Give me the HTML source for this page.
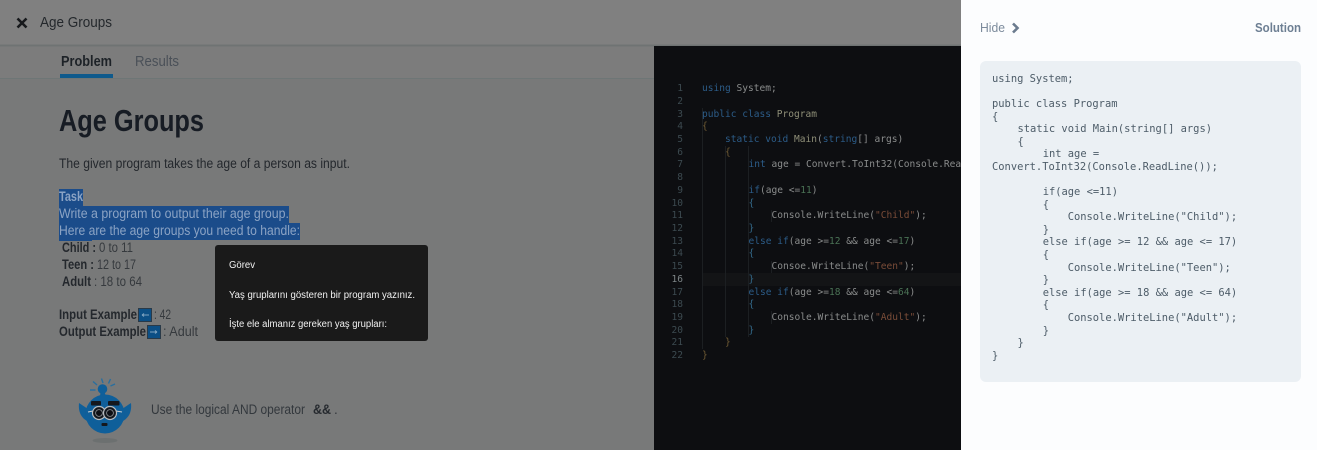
<!DOCTYPE html>
<html><head><meta charset="utf-8"><title>Age Groups</title>
<style>
html,body{margin:0;padding:0;width:1317px;height:450px;overflow:hidden;background:#787878}
svg{display:block}
text{font-family:"Liberation Sans",sans-serif;white-space:pre}
.m text,text.m{font-family:"DejaVu Sans Mono",monospace}
.e text{font-size:9.55px;fill:#8a8c8c}
.n text{font-size:9.55px;fill:#3c4a50;text-anchor:end;font-family:"DejaVu Sans Mono",monospace}
.s text{font-size:10.43px;fill:#4d5c68}
.k{fill:#2c5c88}.q{fill:#7a4c38}.f{fill:#8f8f78}.g{fill:#4a7255}
.r{fill:#a0605a}
.d{fill:#24282d}.u{fill:#363a3e}
</style></head>
<body>
<svg width="1317" height="450" viewBox="0 0 1317 450" xmlns="http://www.w3.org/2000/svg">
<rect width="1317" height="450" fill="#787979"/>
<rect width="961" height="45" fill="#808080"/>
<rect y="45" width="654" height="33" fill="#7c7c7c"/>
<rect y="44.5" width="961" height="2" fill="#6f7373"/>
<rect y="78" width="654" height="1" fill="#6e7676"/>
<path d="M17.500 18.500 L26.500 27.500 M26.500 18.500 L17.500 27.500" stroke="#17191c" stroke-width="2.600" fill="none"/>
<text x="40" y="27" font-size="14.500" fill="#24282c" textLength="72" lengthAdjust="spacingAndGlyphs">Age Groups</text>
<text x="61" y="66" font-size="14.500" font-weight="bold" fill="#1d2227" textLength="51" lengthAdjust="spacingAndGlyphs">Problem</text>
<text x="135" y="66" font-size="14.500" fill="#4a5058" textLength="44" lengthAdjust="spacingAndGlyphs">Results</text>
<rect x="60" y="74" width="53" height="4" fill="#0f5a8c"/>
<text x="59" y="131" font-size="31" font-weight="bold" fill="#171c24" textLength="145" lengthAdjust="spacingAndGlyphs">Age Groups</text>
<text x="59" y="168" font-size="13.500" class="d" textLength="291" lengthAdjust="spacingAndGlyphs">The given program takes the age of a person as input.</text>

<rect x="59" y="189" width="24" height="17" fill="#1b4c8a"/>
<rect x="59" y="206" width="230" height="17" fill="#1b4c8a"/>
<rect x="59" y="223" width="241" height="17" fill="#1b4c8a"/>
<rect x="59" y="240" width="33" height="1" fill="#1b4c8a"/>
<text x="59" y="201" font-size="13.500" font-weight="bold" fill="#8ba3c4" textLength="24" lengthAdjust="spacingAndGlyphs">Task</text>
<text x="59" y="218" font-size="13.500" fill="#8ba3c4" textLength="230" lengthAdjust="spacingAndGlyphs">Write a program to output their age group.</text>
<text x="59" y="235" font-size="13.500" fill="#8ba3c4" textLength="241" lengthAdjust="spacingAndGlyphs">Here are the age groups you need to handle:</text>

<text x="62" y="252" font-size="13.500" font-weight="bold" class="d" textLength="34" lengthAdjust="spacingAndGlyphs">Child :</text>
<text x="99" y="252" font-size="13.500" class="u" textLength="34" lengthAdjust="spacingAndGlyphs">0 to 11</text>
<text x="62" y="269" font-size="13.500" font-weight="bold" class="d" textLength="32" lengthAdjust="spacingAndGlyphs">Teen :</text>
<text x="97" y="269" font-size="13.500" class="u" textLength="39" lengthAdjust="spacingAndGlyphs">12 to 17</text>
<text x="62" y="286" font-size="13.500" font-weight="bold" class="d" textLength="29" lengthAdjust="spacingAndGlyphs">Adult</text>
<text x="94" y="286" font-size="13.500" class="u" textLength="48" lengthAdjust="spacingAndGlyphs">: 18 to 64</text>

<text x="59" y="319" font-size="13.500" font-weight="bold" class="d" textLength="78" lengthAdjust="spacingAndGlyphs">Input Example</text>
<rect x="138.500" y="308.500" width="13" height="13" fill="#0c4f85" stroke="#2a3a48"/>
<path d="M142 315 H149 M142 315 L144 313.500 M142 315 L144 316.500" stroke="#7fa3c0" stroke-width="1" fill="none"/>
<text x="154" y="319" font-size="13.500" class="u" textLength="17" lengthAdjust="spacingAndGlyphs">: 42</text>
<text x="59" y="336" font-size="13.500" font-weight="bold" class="d" textLength="87" lengthAdjust="spacingAndGlyphs">Output Example</text>
<rect x="147.500" y="325.500" width="13" height="13" fill="#0c4f85" stroke="#2a3a48"/>
<path d="M150 332 H157 M157 332 L155 330.500 M157 332 L155 333.500" stroke="#7fa3c0" stroke-width="1" fill="none"/>
<text x="163" y="336" font-size="13.500" class="u" textLength="35" lengthAdjust="spacingAndGlyphs">: Adult</text>

<!-- mascot -->
<ellipse cx="105" cy="440.500" rx="12.500" ry="2.500" fill="#6c7070"/>
<g stroke="#2a6f9f" stroke-width="1.400" fill="none">
<path d="M90 390 H95.500 M93 381.500 L97 385 M101.500 378.500 L103 383 M110.500 379 L108.500 383.500 M115 384 L110.500 386"/>
</g>
<circle cx="102.500" cy="389" r="4.800" fill="#0f5f9a"/>
<path d="M100.500 392 L99 406 H109 L104.500 392 Z" fill="#0f5f9a"/>
<path d="M79 403 L88 409 L87 421 C82 418 78 413 79 403 Z" fill="#0f5f9a"/>
<path d="M131 403 L122 409 L123 421 C128 418 132 413 131 403 Z" fill="#0f5f9a"/>
<circle cx="105" cy="414" r="19.500" fill="#0f5f9a"/>
<rect x="91" y="401" width="10" height="4.500" rx="1" fill="#14181e"/>
<rect x="108" y="401" width="11.500" height="4.500" rx="1" fill="#14181e"/>
<path d="M88 412 L93 411 M116 411 L122 412" stroke="#c8ccd0" stroke-width="1"/>
<circle cx="99" cy="413" r="6.500" fill="#14181e" stroke="#b8bcc0" stroke-width="1.200"/>
<circle cx="110" cy="413" r="6.500" fill="#14181e" stroke="#b8bcc0" stroke-width="1.200"/>
<circle cx="99" cy="413" r="3.400" fill="#0c0e14" stroke="#8f9499" stroke-width="0.800"/>
<circle cx="110" cy="413" r="3.400" fill="#0c0e14" stroke="#8f9499" stroke-width="0.800"/>
<rect x="101.500" y="423" width="6" height="3" rx="1" fill="#14181e"/>

<text x="151" y="414" font-size="13.500" fill="#33383d" textLength="154" lengthAdjust="spacingAndGlyphs">Use the logical AND operator</text>
<text x="313" y="414" font-size="13.500" font-weight="bold" fill="#25292e" textLength="18" lengthAdjust="spacingAndGlyphs">&amp;&amp;</text>
<text x="334" y="414" font-size="13.500" fill="#33383d">.</text>

<!-- tooltip -->
<rect x="215" y="245" width="213" height="96" rx="3" fill="#1a1a1a"/>
<text x="229" y="268" font-size="9.800" fill="#f2f2f2" textLength="26" lengthAdjust="spacingAndGlyphs">Görev</text>
<text x="229" y="298" font-size="9.800" fill="#f2f2f2" textLength="186" lengthAdjust="spacingAndGlyphs">Yaş gruplarını gösteren bir program yazınız.</text>
<text x="229" y="327" font-size="9.800" fill="#f2f2f2" textLength="158" lengthAdjust="spacingAndGlyphs">İşte ele almanız gereken yaş grupları:</text>

<!-- editor -->
<rect x="654" y="46" width="307" height="404" fill="#0d0e11"/>
<rect x="702" y="273" width="259" height="13" fill="#131416"/>
<path d="M702.500 108 V349 M725.500 146 V337 M748.500 146 V337 M771.500 210 V222 M771.500 261 V273 M771.500 311 V324" stroke="#1c1f22" stroke-width="1" fill="none"/>
<g class="n">
<text x="683" y="91">1</text><text x="683" y="104">2</text><text x="683" y="117">3</text><text x="683" y="129">4</text><text x="683" y="142">5</text><text x="683" y="155">6</text><text x="683" y="167">7</text><text x="683" y="180">8</text><text x="683" y="193">9</text><text x="683" y="206">10</text><text x="683" y="218">11</text><text x="683" y="231">12</text><text x="683" y="244">13</text><text x="683" y="256">14</text><text x="683" y="269">15</text><text x="683" y="282" style="fill:#7d8587">16</text><text x="683" y="295">17</text><text x="683" y="307">18</text><text x="683" y="320">19</text><text x="683" y="333">20</text><text x="683" y="345">21</text><text x="683" y="358">22</text>
</g>
<svg x="654" y="46" width="307" height="404" viewBox="654 46 307 404">
<g class="e m">
<text x="702" y="91"><tspan class="k">using</tspan> System;</text>
<text x="702" y="117"><tspan class="k">public class</tspan> <tspan class="f">Program</tspan></text>
<text x="702" y="129" style="fill:#6e5a34">{</text>
<text x="725" y="142"><tspan class="k">static void</tspan> <tspan class="f">Main</tspan>(<tspan class="k">string</tspan>[] args)</text>
<text x="725" y="155" style="fill:#6e5a34">{</text>
<text x="748.500" y="167"><tspan class="k">int</tspan> age = Convert.ToInt32(Console.ReadLine());</text>
<text x="748.500" y="193"><tspan class="k">if</tspan>(age &lt;=<tspan class="g">11</tspan>)</text>
<text x="748.500" y="206" style="fill:#33698a">{</text>
<text x="771.500" y="218">Console.WriteLine(<tspan class="q">"Child"</tspan>);</text>
<text x="748.500" y="231" style="fill:#33698a">}</text>
<text x="748.500" y="244"><tspan class="k">else if</tspan>(age &gt;=<tspan class="g">12</tspan> &amp;&amp; age &lt;=<tspan class="g">17</tspan>)</text>
<text x="748.500" y="256" style="fill:#33698a">{</text>
<text x="771.500" y="269">Consoe.WriteLine(<tspan class="q">"Teen"</tspan>);</text>
<text x="748.500" y="282" style="fill:#33698a">}</text>
<text x="748.500" y="295"><tspan class="k">else if</tspan>(age &gt;=<tspan class="g">18</tspan> &amp;&amp; age &lt;=<tspan class="g">64</tspan>)</text>
<text x="748.500" y="307" style="fill:#33698a">{</text>
<text x="771.500" y="320">Console.WriteLine(<tspan class="q">"Adult"</tspan>);</text>
<text x="748.500" y="333" style="fill:#33698a">}</text>
<text x="725" y="345" style="fill:#6e5a34">}</text>
<text x="702" y="358" style="fill:#6e5a34">}</text>
</g>
</svg>

<!-- side panel -->
<rect x="961" width="356" height="450" fill="#fcfdfe"/>
<text x="980" y="32" font-size="13" fill="#7c8b9c" textLength="25" lengthAdjust="spacingAndGlyphs">Hide</text>
<path d="M1013 23.500 L1017.500 28 L1013 32.500" stroke="#6b7b8e" stroke-width="2.600" fill="none"/>
<text x="1255" y="32" font-size="13" font-weight="bold" fill="#6d7f93" textLength="46" lengthAdjust="spacingAndGlyphs">Solution</text>
<rect x="980" y="61" width="321" height="321" rx="6" fill="#ebf0f4"/>
<g class="s m">
<text x="992" y="82">using System;</text>
<text x="992" y="107">public class Program</text>
<text x="992" y="120" class="r">{</text>
<text x="1017.500" y="132">static void Main(string[] args)</text>
<text x="1017.500" y="145" class="r">{</text>
<text x="1042.700" y="157">int age =</text>
<text x="992" y="170">Convert.ToInt32(Console.ReadLine());</text>
<text x="1042.700" y="195">if(age &lt;=11)</text>
<text x="1042.700" y="208" class="r">{</text>
<text x="1067.700" y="220">Console.WriteLine("Child");</text>
<text x="1042.700" y="233" class="r">}</text>
<text x="1042.700" y="245">else if(age &gt;= 12 &amp;&amp; age &lt;= 17)</text>
<text x="1042.700" y="258" class="r">{</text>
<text x="1067.700" y="271">Console.WriteLine("Teen");</text>
<text x="1042.700" y="283" class="r">}</text>
<text x="1042.700" y="296">else if(age &gt;= 18 &amp;&amp; age &lt;= 64)</text>
<text x="1042.700" y="308" class="r">{</text>
<text x="1067.700" y="321">Console.WriteLine("Adult");</text>
<text x="1042.700" y="334" class="r">}</text>
<text x="1017.500" y="346" class="r">}</text>
<text x="992" y="359" class="r">}</text>
</g>
</svg>
</body></html>
